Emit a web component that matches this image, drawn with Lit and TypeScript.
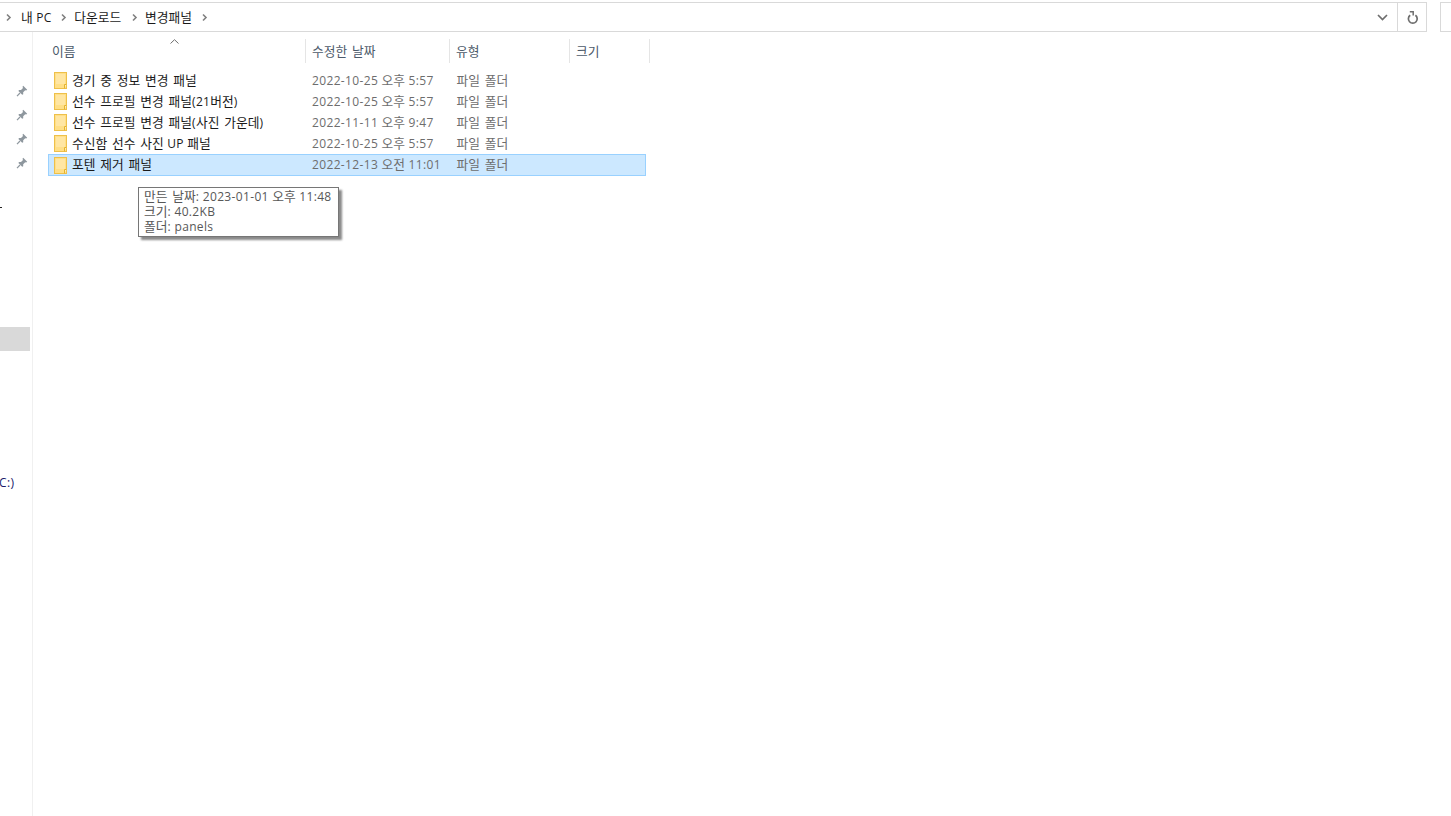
import { LitElement, html, css, svg } from "lit";
import { customElement } from "lit/decorators.js";

const chevron = html`<svg class="chev" width="7" height="9" viewBox="0 0 7 9"><path d="M2 1.5 L5 4.5 L2 7.5" fill="none" stroke="#808080" stroke-width="1.6"/></svg>`;
const folder = html`<svg class="folder" width="14" height="18" viewBox="0 0 14 18"><rect x="0.5" y="0.5" width="12" height="16" fill="#ffdf87" stroke="#eec04a"/><path d="M2 2 H11 V12 H2 Z" fill="#ffe6a3"/><path d="M10.5 16.5 V12.5 H12.5" fill="#fff0bd" stroke="#e5b32f"/></svg>`;
const pin = html`<svg width="12" height="12" viewBox="0 0 12 12"><path d="M7.2 0.8 L11.2 4.8 L10.2 5.6 L9.2 5.2 L7.2 7.2 L7.2 9.2 L6.2 9.8 L2.4 6 L3 5 L5 5 L7 3 L6.5 1.8 Z" fill="#8e979e"/><path d="M4 8 L1 11.2" stroke="#8e979e" stroke-width="1.2"/></svg>`;

/* Hangul runs (with their inner spaces) get their own metrics, as the screenshot's font is wider there than in Latin. */
const t = (s: string) =>
  s
    .split(/([\uac00-\ud7a3]+(?: +[\uac00-\ud7a3]+)*)/)
    .map((part, i) => (i % 2 ? html`<span class="k">${part}</span>` : part));

const rows = [
  ["경기 중 정보 변경 패널", "2022-10-25 오후 5:57"],
  ["선수 프로필 변경 패널(21버전)", "2022-10-25 오후 5:57"],
  ["선수 프로필 변경 패널(사진 가운데)", "2022-11-11 오후 9:47"],
  ["수신함 선수 사진 UP 패널", "2022-10-25 오후 5:57"],
  ["포텐 제거 패널", "2022-12-13 오전 11:01"],
];

@customElement("app-root")
export class AppRoot extends LitElement {
  static styles = css`
    :host {
      display: block;
      position: relative;
      width: 1451px;
      height: 816px;
      overflow: hidden;
      background: #fff;
      font-family: "Open Sans", "Noto Sans CJK KR", sans-serif;
      font-size: 12px;
      line-height: 15px;
      letter-spacing: 0.35px;
    }
    .k { display: inline-block; font-size: 12.75px; line-height: 14px; letter-spacing: 0; word-spacing: 1.5px; }
    .top {
      display: flex;
      height: 30px;
      margin-top: 2px;
    }
    .addr {
      width: 1427px;
      box-sizing: border-box;
      display: flex;
      align-items: center;
      border: 1px solid #d9d9d9;
      border-left: none;
    }
    .crumbs {
      flex: 1;
      display: flex;
      align-items: center;
      padding-left: 5px;
      color: #1a1a1a;
    }
    .crumbs span.c { margin: 0 8.5px 0 7px; white-space: nowrap; }
    .crumbs span.c.first { margin-left: 9px; }
    .crumbs span.c.second { margin-right: 10px; }
    .drop { width: 30px; display: flex; justify-content: center; }
    .refresh {
      width: 29px;
      height: 100%;
      box-sizing: border-box;
      border-left: 1px solid #d9d9d9;
      display: flex;
      align-items: center;
      justify-content: center;
      padding-left: 2px;
    }
    .search {
      margin-left: 13px;
      flex: 1;
      border: 1px solid #d9d9d9;
      border-right: none;
    }
    .body { display: flex; height: 784px; }
    .nav {
      width: 33px;
      box-sizing: border-box;
      border-right: 1px solid #f0f0f0;
      padding-top: 47px;
      flex: none;
    }
    .pin {
      height: 24px;
      display: flex;
      align-items: center;
      justify-content: flex-end;
      padding-right: 4px;
    }
    .dash { margin-top: 20px; height: 24px; display: flex; align-items: center; }
    .dash i { width: 2px; height: 1px; background: #222; display: block; }
    .hl { margin-top: 108px; width: 30px; height: 24px; background: #d9d9d9; }
    .drive {
      margin-top: 120px;
      height: 24px;
      line-height: 24px;
      color: #1a1a6a;
      margin-left: -1px;
      white-space: nowrap;
    }
    .main { flex: 1; padding-top: 7px; position: relative; }
    .head { display: flex; height: 24px; color: #4c5a6a; }
    .hc {
      box-sizing: border-box;
      border-right: 1px solid #e5e5e5;
      padding-left: 6px;
      padding-top: 1px;
      line-height: 24px;
      position: relative;
    }
    .hc.n { width: 273px; padding-left: 19px; }
    .hc.d { width: 144px; }
    .hc.t { width: 120px; }
    .hc.s { width: 80px; }
    .caret { position: absolute; left: 137px; top: 0; }
    .list { margin: 7px 0 0 15px; width: 598px; }
    .row { display: flex; align-items: center; height: 21px; box-sizing: border-box; color: #1a1a1a; }
    .row.sel {
      height: 22px;
      padding-bottom: 1px;
      background: #cce8ff;
      border: 1px solid #99d1ff;
      margin-bottom: -1px;
    }
    .folder { margin-left: 6px; margin-top: 1px; flex: none; }
    .sel .folder { margin-left: 5px; margin-top: 2px; }
    .name { margin-left: 4px; width: 240px; white-space: nowrap; }
    .date { width: 144.5px; color: #6d6d6d; white-space: nowrap; }
    .type { color: #6d6d6d; white-space: nowrap; }
    .tip {
      position: absolute;
      left: 105px;
      top: 155px;
      width: 201px;
      box-sizing: border-box;
      height: 50px;
      padding: 1px 5px;
      background: #fff;
      border: 1px solid #767676;
      box-shadow: 3px 3px 2px #8a8a8a;
      color: #575757;
      white-space: nowrap;
    }
    .tip div { height: 15px; }
  `;

  render() {
    return html`
      <div class="top">
        <div class="addr">
          <div class="crumbs">
            ${chevron}<span class="c first">${t("내 PC")}</span>${chevron}<span class="c second">${t("다운로드")}</span>${chevron}<span class="c">${t("변경패널")}</span>${chevron}
          </div>
          <div class="drop">
            <svg width="11" height="7" viewBox="0 0 11 7"><path d="M1 1 L5.5 5.5 L10 1" fill="none" stroke="#6e6e6e" stroke-width="1.7"/></svg>
          </div>
          <div class="refresh">
            <svg width="12" height="13" viewBox="0 0 12 13">
              ${svg`<path d="M3.2 3.2 A4.4 4.4 0 1 0 8.4 3.2" fill="none" stroke="#6e6e6e" stroke-width="1.7" transform="translate(0 1)"/><path d="M2.8 0.8 H6.2 V4.6" fill="none" stroke="#6e6e6e" stroke-width="1.5"/>`}
            </svg>
          </div>
        </div>
        <div class="search"></div>
      </div>
      <div class="body">
        <div class="nav">
          <div class="pin">${pin}</div>
          <div class="pin">${pin}</div>
          <div class="pin">${pin}</div>
          <div class="pin">${pin}</div>
          <div class="dash"><i></i></div>
          <div class="hl"></div>
          <div class="drive">C:)</div>
        </div>
        <div class="main">
          <div class="head">
            <div class="hc n">${t("이름")}
              <svg class="caret" width="9" height="5" viewBox="0 0 9 5"><path d="M0.5 4.5 L4.5 0.7 L8.5 4.5" fill="none" stroke="#6e6e6e" stroke-width="1"/></svg>
            </div>
            <div class="hc d">${t("수정한 날짜")}</div>
            <div class="hc t">${t("유형")}</div>
            <div class="hc s">${t("크기")}</div>
          </div>
          <div class="list">
            ${rows.map(
              (r, i) => html`<div class="row ${i === 4 ? "sel" : ""}">
                ${folder}
                <div class="name">${t(r[0])}</div>
                <div class="date">${t(r[1])}</div>
                <div class="type">${t("파일 폴더")}</div>
              </div>`
            )}
          </div>
          <div class="tip">
            <div>${t("만든 날짜")}: 2023-01-01 ${t("오후")} 11:48</div>
            <div>${t("크기")}: 40.2KB</div>
            <div>${t("폴더")}: panels</div>
          </div>
        </div>
      </div>
    `;
  }
}
